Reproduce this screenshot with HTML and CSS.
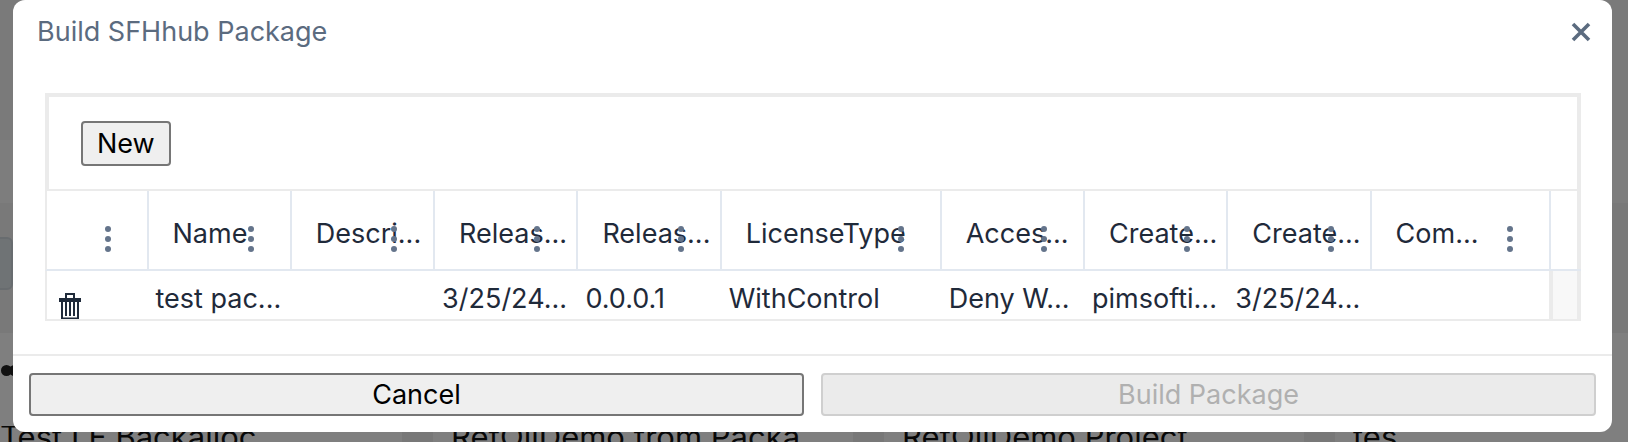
FILE: index.html
```html
<!DOCTYPE html>
<html lang="en">
<head>
<meta charset="UTF-8">
<meta name="viewport" content="width=device-width, initial-scale=1.0">
<title>Build SFHhub Package</title>
<link rel="stylesheet" href="styles.css">
</head>
<body>
<!-- Page behind the dialog -->
<div class="page">
  <div class="band band-a"></div>
  <div class="band band-b"></div>
  <div class="band band-c"><div class="page-input"></div></div>
  <div class="band band-d"><div class="page-dot"></div></div>
  <div class="page-cards">
    <div class="page-card card-a">Test LF Backalloc</div>
    <div class="page-card card-b">RefOilDemo from Packa</div>
    <div class="page-card card-b">RefOilDemo Project</div>
    <div class="page-card card-d">tes</div>
  </div>
</div>
<div class="backdrop"></div>

<div class="modal">
  <div class="modal-header">
    <span class="modal-title">Build SFHhub Package</span>
    <svg class="close-icon" width="22" height="22" viewBox="0 0 22 22"><path d="M3 3 L19 19 M19 3 L3 19" stroke="#5b6b7f" stroke-width="3.6"/></svg>
  </div>

  <div class="modal-body">
    <div class="grid">
      <div class="grid-toolbar"><button class="btn-new">New</button></div>

      <div class="grid-row head-row">
        <div class="cell col-action"><span class="dots"><i></i><i></i><i></i></span></div>
        <div class="cell col-std"><span class="label">Name</span><span class="dots"><i></i><i></i><i></i></span></div>
        <div class="cell col-std"><span class="label">Descri...</span><span class="dots"><i></i><i></i><i></i></span></div>
        <div class="cell col-std"><span class="label">Releas...</span><span class="dots"><i></i><i></i><i></i></span></div>
        <div class="cell col-std"><span class="label">Releas...</span><span class="dots"><i></i><i></i><i></i></span></div>
        <div class="cell col-wide"><span class="label">LicenseType</span><span class="dots"><i></i><i></i><i></i></span></div>
        <div class="cell col-std"><span class="label">Acces...</span><span class="dots"><i></i><i></i><i></i></span></div>
        <div class="cell col-std"><span class="label">Create...</span><span class="dots"><i></i><i></i><i></i></span></div>
        <div class="cell col-std"><span class="label">Create...</span><span class="dots"><i></i><i></i><i></i></span></div>
        <div class="cell col-last"><span class="label">Com...</span><span class="dots"><i></i><i></i><i></i></span></div>
        <div class="col-scroll"></div>
      </div>

      <div class="grid-row data-row">
        <div class="cell col-action">
          <svg class="trash" width="24" height="28" viewBox="0 0 24 28"><path d="M8 7 V2 H16 V7" fill="none" stroke="#1f2a3a" stroke-width="2"/><path d="M1 6 H23 V10 H1 Z" fill="#1f2a3a"/><path d="M4 10 V26.5 H20 V10 M8 10 V24 M12 10 V24 M16 10 V24" fill="none" stroke="#1f2a3a" stroke-width="2"/></svg>
        </div>
        <div class="cell col-std">test pac...</div>
        <div class="cell col-std"></div>
        <div class="cell col-std">3/25/24...</div>
        <div class="cell col-std">0.0.0.1</div>
        <div class="cell col-wide">WithControl</div>
        <div class="cell col-std">Deny W...</div>
        <div class="cell col-std">pimsofti...</div>
        <div class="cell col-std">3/25/24...</div>
        <div class="cell col-last"></div>
        <div class="col-scroll"></div>
      </div>
    </div>
  </div>

  <div class="modal-footer">
    <button class="btn-footer">Cancel</button>
    <button class="btn-footer" disabled>Build Package</button>
  </div>
</div>
</body>
</html>
```

FILE: styles.css
```css
html, body {
  margin: 0;
  height: 100%;
  overflow: hidden;
}
body {
  font-family: Inter, "Liberation Sans", sans-serif;
  background: #fff;
  position: relative;
}

/* Page behind the dialog */
.page {
  height: 442px;
  display: flex;
  flex-direction: column;
  overflow: hidden;
}
.band { position: relative; }
.band-a { height: 140px; background: #f5f5f5; }
.band-b { height: 63px; background: #fafafa; }
.band-c { height: 130px; background: #f3f3f3; }
.band-d { height: 93px; background: #fefefe; }
.page-cards {
  display: flex;
  flex: 1;
  overflow: hidden;
  font-size: 31px;
  line-height: 21px;
  color: #111;
  background: #fefefe;
}
.page-card {
  white-space: nowrap;
  overflow: hidden;
  box-sizing: border-box;
}
.card-a { width: 433px; border-right: 31px solid #f0f0f0; }
.card-b { width: 451px; border-right: 31px solid #f0f0f0; padding-left: 18px; }
.card-d { flex: 1; padding-left: 18px; }
.page-input {
  position: absolute;
  left: -10px; top: 34px;
  width: 19px; height: 49px;
  border: 2px solid #d0d8df;
  border-radius: 6px;
  background: #dfe6ea;
}
.page-dot {
  position: absolute;
  left: 1px; top: 32px;
  width: 11px; height: 11px;
  border-radius: 50%;
  background: #222;
  box-shadow: 8px 0 0 #222;
}
.backdrop {
  position: absolute;
  inset: 0;
  background: rgba(0,0,0,0.5);
}

/* Dialog */
.modal {
  position: absolute;
  left: 13px; top: 0;
  width: 1599px; height: 432px;
  background: #fff;
  border-radius: 12px;
  display: flex;
  flex-direction: column;
  box-sizing: border-box;
}
.modal-header {
  height: 63px;
  display: flex;
  align-items: center;
  justify-content: space-between;
  padding: 0 20px 0 24px;
}
.modal-title {
  font-size: 27px;
  color: #5b6b7f;
}
.modal-body {
  flex: 1;
  padding: 30px 31px 0 32px;
}
.grid {
  font-size: 27px;
  color: #1f2a3a;
}
.grid-toolbar {
  height: 92px;
  border: 4px solid #ebebeb;
  border-bottom-width: 2px;
  display: flex;
  align-items: center;
  padding-left: 32px;
}
.btn-new {
  font: inherit;
  color: #000;
  height: 45px;
  padding: 0 14px;
  background: #efefef;
  border: 2px solid #767676;
  border-radius: 4px;
}
.grid-row {
  display: flex;
}
.head-row {
  height: 80px;
  border-bottom: 2px solid #e2e8f0;
  border-left: 2px solid #ebebeb;
  box-sizing: border-box;
}
.data-row {
  height: 50px;
  border-bottom: 2px solid #ebebeb;
  border-left: 2px solid #ebebeb;
  box-sizing: border-box;
}
.cell {
  position: relative;
  box-sizing: border-box;
  padding: 0 7px;
  white-space: nowrap;
  overflow: hidden;
  display: flex;
  align-items: center;
}
.head-row .cell {
  border-right: 2px solid #e2e8f0;
  padding-left: 24px;
  padding-top: 6px;
}
.data-row .cell {
  padding-top: 6px;
}
.col-action { width: 101.5px; }
.col-std { width: 143.3px; }
.col-wide { width: 220px; }
.col-last { width: 179px; }
.col-scroll {
  flex: 1;
  border-right: 4px solid #ebebeb;
}
.data-row .col-scroll {
  background: #f8f8f8;
  border-left: 2px solid #ebebeb;
}
.data-row .col-action {
  padding: 21px 0 0 11px;
  align-items: flex-start;
}
.data-row .col-last { border-right: 2px solid #ebebeb; }

/* Column menu dots, they sit on top of the label */
.dots {
  position: absolute;
  right: 36px;
  top: 35px;
  display: flex;
  flex-direction: column;
  gap: 4px;
}
.dots i {
  display: block;
  width: 6px; height: 6px;
  border-radius: 50%;
  background: #64748b;
}

.modal-footer {
  height: 78px;
  border-top: 2px solid #ebebeb;
  box-sizing: border-box;
  display: flex;
  gap: 17px;
  padding: 17px 16px 16px;
}
.btn-footer {
  flex: 1;
  font: inherit;
  font-size: 27px;
  color: #000;
  background: #efefef;
  border: 2px solid #767676;
  border-radius: 4px;
}
.btn-footer:disabled {
  color: #b0b0b0;
  background: #ebebeb;
  border-color: #cfcfcf;
}
```
